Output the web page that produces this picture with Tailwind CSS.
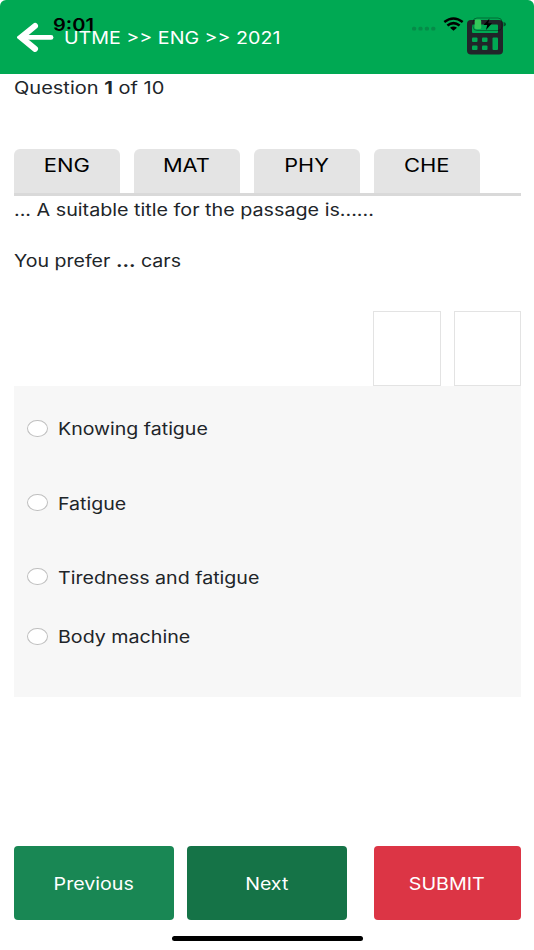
<!DOCTYPE html>
<html lang="en">
<head>
<meta charset="utf-8">
<title>UTME Practice</title>
<script src="https://cdn.jsdelivr.net/npm/@tailwindcss/browser@4"></script>
</head>
<body class="bg-white">
<div class="relative flex h-[950px] w-[534px] flex-col overflow-hidden bg-white font-['Inter','Liberation_Sans',sans-serif] text-[17px] leading-[24px] text-[#212529]">
  <header class="relative flex h-[74px] shrink-0 items-center rounded-t-[6px] bg-[#00a953] pl-[17px] text-white">
    <svg class="h-[30px] w-[37px] shrink-0" viewBox="0 0 37 30" fill="none" stroke="#fff" stroke-linecap="round"><path d="M18 4 4 15.400 18 26.800" stroke-width="6" stroke-linejoin="miter"/><path d="M5 15.400H34" stroke-width="4.800"/></svg>
    <span class="ml-[10px] mt-[2px] inline-block origin-left scale-x-[1.155] whitespace-nowrap">UTME &gt;&gt; ENG &gt;&gt; 2021</span>
    <svg class="absolute left-[467px] top-[20px] h-[35px] w-[36px]" viewBox="0 0 36 35">
      <rect width="36" height="34.500" rx="4" fill="#212529"/>
      <g fill="#00a953"><rect x="5" y="4.500" width="26" height="8.500" rx="1"/><rect x="5" y="17.500" width="5.500" height="4.500" rx="1"/><rect x="15" y="17.500" width="5.500" height="4.500" rx="1"/><rect x="25.500" y="17.500" width="5.500" height="12.500" rx="1"/><rect x="5" y="25.500" width="5.500" height="4.500" rx="1"/><rect x="15" y="25.500" width="5.500" height="4.500" rx="1"/></g>
    </svg>
    <div class="absolute left-[53px] top-[13px] origin-left scale-x-[1.18] font-semibold text-black">9:01</div>
    <svg class="absolute left-[411px] top-[14px] h-[20px] w-[96px]" viewBox="0 0 96 20">
      <g fill="#058b48"><rect x="1" y="12.800" width="4.200" height="3.600" rx="1.500"/><rect x="7.400" y="12.800" width="4.200" height="3.600" rx="1.500"/><rect x="13.800" y="12.800" width="4.200" height="3.600" rx="1.500"/><rect x="20.200" y="12.800" width="4.200" height="3.600" rx="1.500"/></g>
      <g fill="none" stroke="#000" stroke-width="2.500"><path d="M33.300 8.100Q42.500 1 51.700 8.100"/><path d="M36.400 11.500Q42.500 6.700 48.600 11.500"/></g><path d="M39 13.800Q42.500 11.300 46 13.800L42.500 16.800Z"/>
      <rect x="62" y="4" width="29" height="12.500" rx="4" fill="none" stroke="#000" stroke-opacity=".35"/>
      <rect x="63.700" y="5.500" width="6.500" height="9.500" rx="1.500" fill="#34c759"/>
      <path d="M92.500 8Q95 8.500 95 10.200T92.500 12.500Z" fill="#000" fill-opacity=".5"/>
      <path d="M78.500 4.500 72.500 11H76.200L75 16 81 9.300H77.200Z"/>
    </svg>
  </header>
  <main class="flex flex-col pl-[13.500px] pr-[13.500px]">
    <p class="mt-[2px] h-[24px]"><span class="inline-block origin-left scale-x-[1.177] whitespace-nowrap">Question <b>1</b> of 10</span></p>
    <nav class="mt-[49px] flex h-[47px] gap-[13.500px] border-b-[3px] border-[#d9d9d9] text-center text-[18px] text-black">
      <div class="w-[106.500px] rounded-t-[6px] bg-[#e4e4e4] pt-[5px]"><span class="inline-block scale-x-[1.22]">ENG</span></div>
      <div class="w-[106.500px] rounded-t-[6px] bg-[#e4e4e4] pt-[5px]"><span class="inline-block scale-x-[1.21]">MAT</span></div>
      <div class="w-[106.500px] rounded-t-[6px] bg-[#e4e4e4] pt-[5px]"><span class="inline-block scale-x-[1.2]">PHY</span></div>
      <div class="w-[106.500px] rounded-t-[6px] bg-[#e4e4e4] pt-[5px]"><span class="inline-block scale-x-[1.22]">CHE</span></div>
    </nav>
    <p class="mt-[2px] h-[24px]"><span class="inline-block origin-left scale-x-[1.16] whitespace-nowrap">... A suitable title for the passage is......</span></p>
    <p class="mt-[26.500px] h-[24px]"><span class="inline-block origin-left scale-x-[1.15] whitespace-nowrap">You prefer <b>...</b> cars</span></p>
    <div class="mt-[38.500px] flex h-[75px] justify-end gap-[13px]">
      <div class="w-[67.500px] border border-[#e3e3e3]"></div>
      <div class="w-[67px] border border-[#e3e3e3]"></div>
    </div>
    <section class="flex h-[311px] flex-col bg-[#f7f7f7] pl-[13.500px] pt-[30.500px]">
      <label class="flex h-[24px] items-center gap-[10px]"><i class="h-[17px] w-[20.500px] rounded-[50%] border border-[#bfbfbf] bg-white"></i><span class="mt-px inline-block origin-left scale-x-[1.15] whitespace-nowrap">Knowing fatigue</span></label>
      <label class="mt-[50px] flex h-[24px] items-center gap-[10px]"><i class="h-[17px] w-[20.500px] rounded-[50%] border border-[#bfbfbf] bg-white"></i><span class="mt-[2px] inline-block origin-left scale-x-[1.15] whitespace-nowrap">Fatigue</span></label>
      <label class="mt-[50px] flex h-[24px] items-center gap-[10px]"><i class="h-[17px] w-[20.500px] rounded-[50%] border border-[#bfbfbf] bg-white"></i><span class="mt-[2px] inline-block origin-left scale-x-[1.153] whitespace-nowrap">Tiredness and fatigue</span></label>
      <label class="mt-[35.500px] flex h-[24px] items-center gap-[10px]"><i class="h-[17px] w-[20.500px] rounded-[50%] border border-[#bfbfbf] bg-white"></i><span class="mt-px inline-block origin-left scale-x-[1.156] whitespace-nowrap">Body machine</span></label>
    </section>
  </main>
  <footer class="mt-[149px] flex h-[74px] pl-[13.500px] text-white">
    <button class="w-[160.500px] rounded-[4px] bg-[#198754] pt-[2px]"><span class="inline-block scale-x-[1.155]">Previous</span></button>
    <button class="ml-[13px] w-[160px] rounded-[4px] bg-[#157347] pt-[2px]"><span class="inline-block scale-x-[1.15]">Next</span></button>
    <button class="ml-[26.500px] w-[147px] rounded-[4px] bg-[#dc3545] pt-[2px]"><span class="inline-block scale-x-[1.16]">SUBMIT</span></button>
  </footer>
  <div class="ml-[171.500px] mt-[16px] h-[5px] w-[191px] rounded-full bg-black"></div>
</div>
</body>
</html>
